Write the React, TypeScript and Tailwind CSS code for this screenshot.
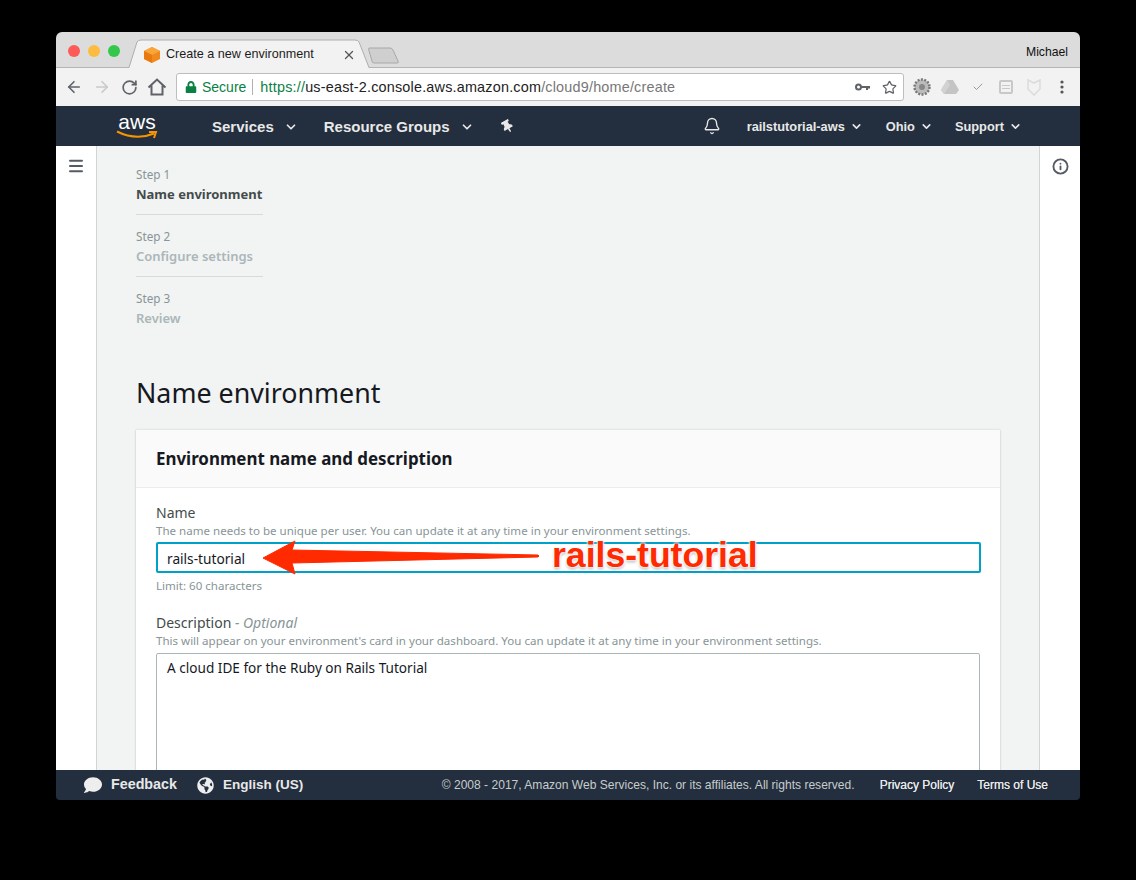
import React from "react";
import { ArrowLeft, ArrowRight, RotateCw, Star, Check, ChevronDown, Bell, Info, Menu, X } from "lucide-react";
import { FaComment, FaGlobeAmericas, FaThumbtack, FaLock } from "react-icons/fa";

const ui = "font-['Liberation_Sans',sans-serif]";
const ember = "font-['Noto_Sans',sans-serif]";

function Caret({ size = 14 }: { size?: number }) {
  return <ChevronDown size={size} strokeWidth={3} className="text-gray-200" />;
}

function TabBar() {
  return (
    <div className={`relative h-9 shrink-0 rounded-t-[6px] bg-[#dcdcdc] border-b border-[#b4b4b4] ${ui}`}>
      <svg className="absolute left-[60px] top-0" width="260" height="36" viewBox="0 0 260 36">
        <path d="M13 36 L21 10 Q22 8 25 8 L239 8 Q242 8 243 10 L253 36 Z" fill="#f2f2f2" />
        <path d="M13 35.5 L21 10 Q22 8 25 8 L239 8 Q242 8 243 10 L253 35.5" fill="none" stroke="#aeaeae" />
      </svg>
      <div className="absolute left-[12px] top-[13px] flex gap-[8px]">
        <span className="h-3 w-3 rounded-full bg-[#fc5b57]" />
        <span className="h-3 w-3 rounded-full bg-[#fdbc40]" />
        <span className="h-3 w-3 rounded-full bg-[#34c84a]" />
      </div>
      <svg className="absolute left-[87px] top-[14px]" width="18" height="18" viewBox="0 0 18 18">
        <path d="M9 1 L17 5 L17 13 L9 17 L1 13 L1 5 Z" fill="#f08a1d" />
        <path d="M9 1 L17 5 L9 9 L1 5 Z" fill="#f9a53a" />
        <path d="M9 9 L9 17 L1 13 L1 5 Z" fill="#e8790f" />
      </svg>
      <span className="absolute left-[110px] top-[15px] text-[12.6px] leading-[15px] text-[#1c1c1c]">Create a new environment</span>
      <X size={14} strokeWidth={2.2} className="absolute left-[286px] top-[16px] text-[#555]" />
      <svg className="absolute left-[310px] top-[15px]" width="36" height="18" viewBox="0 0 36 18">
        <path d="M2.5 2 Q2.5 1 4 1 L24 1 Q26 1 27 3 L32 14 Q33 16 31 16 L8 16 Q6 16 6 14 Z" fill="#cfcfcf" stroke="#a8a8a8" />
      </svg>
      <span className="absolute right-[12px] top-[13px] text-[12.2px] leading-[15px] text-[#111]">Michael</span>
    </div>
  );
}

function Toolbar() {
  return (
    <div className={`flex h-[38px] shrink-0 items-center bg-[#f2f2f2] ${ui}`}>
      <div className="flex w-[120px] items-center pl-[9px] gap-[10px]">
        <ArrowLeft size={18} strokeWidth={2.2} className="text-[#5f6368]" />
        <ArrowRight size={18} strokeWidth={2.2} className="text-[#c9c9c9]" />
        <RotateCw size={17} strokeWidth={2.4} className="text-[#5f6368]" />
        <svg width="20" height="20" viewBox="0 0 20 20" className="-ml-[1px]">
          <path d="M1.5 10.5 L10 2.5 L18.5 10.5 M4.5 8.5 V17.5 H15.5 V8.5" fill="none" stroke="#5f6368" strokeWidth="2" />
        </svg>
      </div>
      <div className="flex h-[28px] w-[728px] items-center rounded-[3px] border border-[#bdbdbd] bg-white pl-[8px] pr-[6px] text-[14px]">
        <FaLock size={12} className="text-[#0b8043]" />
        <span className="ml-[5px] pt-[1px] text-[#0b8043]">Secure</span>
        <span className="ml-[6px] mr-[7px] h-[16px] w-px bg-[#b0b0b0]" />
        <span className="pt-[1px] text-[14.4px] tracking-[0.2px]"><span className="text-[#0b8043]">https://</span><span className="text-[#222]">us-east-2.console.aws.amazon.com</span><span className="text-[#777]">/cloud9/home/create</span></span>
        <svg width="15" height="8" viewBox="0 0 15 8" className="ml-auto mr-[12px]">
          <circle cx="3.5" cy="4" r="2.5" fill="none" stroke="#5f6368" strokeWidth="2" />
          <path d="M6 3 H15 V5.5 H13 V7 H11 V5 H6 Z" fill="#5f6368" />
        </svg>
        <Star size={15} strokeWidth={2} className="text-[#5f6368]" />
      </div>
      <div className="flex flex-1 items-center">
        <svg width="18" height="18" viewBox="0 0 18 18" className="ml-[9px]">
          <circle cx="9" cy="9" r="7.5" fill="#bbb" stroke="#777" strokeWidth="2.4" strokeDasharray="2 1.4" />
          <circle cx="9" cy="9" r="3" fill="#888" />
        </svg>
        <svg width="18" height="16" viewBox="0 0 18 16" className="ml-[10px]"><path d="M6 1 L12 1 L18 11 L15 15 L3 15 L0 11 Z" fill="#c4c4c4" /><path d="M6 1 L9 6 L3 15 L0 11 Z" fill="#d2d2d2" /></svg>
        <span className="ml-[11px] flex w-[16px] justify-center"><Check size={12} strokeWidth={2} className="text-[#999]" /></span>
        <span className="ml-[13px] flex h-[14px] w-[14px] flex-col justify-center gap-[2px] rounded-[2px] border-2 border-[#c8c8c8] px-[1px]">
          <span className="h-px bg-[#c8c8c8]" />
          <span className="h-px bg-[#c8c8c8]" />
        </span>
        <svg width="16" height="17" viewBox="0 0 16 17" className="ml-[13px]"><path d="M2 1 L8 4 L14 1 L14 10 L8 16 L2 10 Z" fill="none" stroke="#dcdcdc" strokeWidth="1.6" /></svg>
        <svg width="4" height="14" viewBox="0 0 4 14" className="ml-[18px]">
          <circle cx="2" cy="2" r="1.6" fill="#555" /><circle cx="2" cy="7" r="1.6" fill="#555" /><circle cx="2" cy="12" r="1.6" fill="#555" />
        </svg>
      </div>
    </div>
  );
}

function Nav() {
  return (
    <div className={`relative flex h-10 shrink-0 items-center bg-[#232f3e] text-[#e8e8e8] ${ui}`}>
      <div className="ml-[60px] flex w-[42px] flex-col items-center">
        <span className="text-[21px] leading-[17px] text-white">aws</span>
        <svg width="42" height="10" viewBox="0 0 42 10"><path d="M1 1.5 Q20 11 38 3.5 M33 2 L40 2 L38 8" fill="none" stroke="#f79400" strokeWidth="2" /></svg>
      </div>
      <span className="ml-[54px] pt-[2px] text-[15px] font-bold">Services</span>
      <span className="ml-[10px] pt-[1px]"><Caret /></span>
      <span className="ml-[26px] pt-[2px] text-[15px] font-bold">Resource Groups</span>
      <span className="ml-[10px] pt-[1px]"><Caret /></span>
      <FaThumbtack size={13} className="ml-[27px] rotate-[-30deg] text-[#e8e8e8]" />
      <span className="ml-auto flex items-center">
        <Bell size={18} strokeWidth={1.8} />
        <span className="ml-[26px] pt-[2px] text-[12.8px] font-bold">railstutorial-aws</span>
        <span className="ml-[5px] pt-[1px]"><Caret size={13} /></span>
        <span className="ml-[23px] pt-[2px] text-[12.8px] font-bold">Ohio</span>
        <span className="ml-[5px] pt-[1px]"><Caret size={13} /></span>
        <span className="ml-[22px] pt-[2px] text-[12.8px] font-bold">Support</span>
        <span className="ml-[5px] mr-[58px] pt-[1px]"><Caret size={13} /></span>
      </span>
    </div>
  );
}

function Step({ n, label, state, last }: { n: number; label: string; state: "on" | "off"; last?: boolean }) {
  return (
    <div className={`h-[62px] w-[127px] pt-[13px] ${last ? "" : "border-b border-[#d5dbdb]"}`}>
      <div className="text-[11.7px] leading-[16px] text-[#879596]">Step {n}</div>
      <div className={`mt-[2px] whitespace-nowrap text-[13px] leading-[20px] ${state === "on" ? "font-bold text-[#444b4b]" : "font-semibold text-[#aab7b8]"}`}>{label}</div>
    </div>
  );
}

function Main() {
  return (
    <div className={`flex-1 overflow-hidden border-x border-[#d0d5d5] bg-[#f2f3f3] pl-[39px] pr-[38px] pt-[7px] ${ember}`}>
      <Step n={1} label="Name environment" state="on" />
      <Step n={2} label="Configure settings" state="off" />
      <Step n={3} label="Review" state="off" last />
      <h1 className="mt-[36px] text-[26.8px] leading-[36px] text-[#16191f]">Name environment</h1>
      <div className="mt-[18px] w-[864px] border-t border-[#e4e7e7] bg-white shadow-[0_1px_2px_rgba(0,0,0,0.25)]">
        <div className="flex h-[58px] items-center border-b border-[#eaeded] bg-[#fafafa] px-[20px] text-[16.9px] font-bold text-[#16191f]">
          Environment name and description
        </div>
        <div className="px-[20px] pt-[15px]">
          <div className="text-[14px] leading-[20px] text-[#444b4b]">Name</div>
          <div className="text-[11.55px] leading-[16px] text-[#879596]">The name needs to be unique per user. You can update it at any time in your environment settings.</div>
          <div className="mt-[3px] flex h-[31px] w-[825px] items-center rounded-[2px] border-2 border-[#00a1c9] px-[9px] pt-[3px] text-[13.7px] text-[#16191f]">rails-tutorial</div>
          <div className="mt-[5px] text-[11.55px] leading-[16px] text-[#879596]">Limit: 60 characters</div>
          <div className="mt-[19px] text-[14px] leading-[20px] text-[#444b4b]">Description <span className="italic text-[#879596]">- Optional</span></div>
          <div className="text-[11.55px] leading-[16px] text-[#879596]">This will appear on your environment's card in your dashboard. You can update it at any time in your environment settings.</div>
          <div className="mt-[4px] h-[200px] w-[824px] rounded-[2px] border border-[#aab7b8] px-[10px] py-[4px] text-[13.6px] leading-[20px] text-[#16191f]">A cloud IDE for the Ruby on Rails Tutorial</div>
        </div>
      </div>
    </div>
  );
}

function Footer() {
  return (
    <div className={`flex h-[30px] shrink-0 items-center rounded-b-[4px] bg-[#232f3e] text-[#e8e8e8] ${ui}`}>
      <FaComment size={18} className="ml-[28px] text-[#eee]" />
      <span className="ml-[9px] text-[14.3px] font-bold">Feedback</span>
      <FaGlobeAmericas size={17} className="ml-[20px] text-[#eee]" />
      <span className="ml-[9px] text-[13.5px] font-bold">English (US)</span>
      <span className="ml-auto text-[12.05px] text-[#c8cccc]">© 2008 - 2017, Amazon Web Services, Inc. or its affiliates. All rights reserved.</span>
      <span className="ml-[25px] text-[12px] [text-shadow:0_0_0.6px_currentColor]">Privacy Policy</span>
      <span className="ml-[23px] mr-[32px] text-[12px] [text-shadow:0_0_0.6px_currentColor]">Terms of Use</span>
    </div>
  );
}

export default function App() {
  return (
    <div className="h-[880px] w-[1136px] overflow-hidden bg-black pl-[56px] pt-[32px]">
      <div className="relative flex h-[768px] w-[1024px] flex-col">
        <TabBar />
        <Toolbar />
        <Nav />
        <div className="flex min-h-0 flex-1 bg-white">
          <div className="w-[40px] shrink-0 pl-[11px] pt-[11px]"><Menu size={18} strokeWidth={2.6} className="text-[#545b64]" /></div>
          <Main />
          <div className="flex w-[40px] shrink-0 justify-center pt-[12px]"><Info size={17} strokeWidth={2.6} className="text-[#545b64]" /></div>
        </div>
        <Footer />
        <svg className="absolute left-[200px] top-[500px]" width="290" height="50" viewBox="0 0 290 50">
          <path d="M7 26 L39 9 L36 18 L282 23 Q284 24 282 25 L36 31 L39 42 Z" fill="#ff2a00" stroke="#ff2a00" strokeWidth="1" strokeLinejoin="round" />
        </svg>
        <span className="absolute left-[496px] top-[501px] font-['Liberation_Sans',sans-serif] text-[35.6px] font-bold leading-[44px] text-[#ff2a00] [text-shadow:0_0_2px_#fff,0_0_3px_#fff,0_0_3px_#fff,0_2px_3px_rgba(0,0,0,0.35)]">rails-tutorial</span>
      </div>
    </div>
  );
}
